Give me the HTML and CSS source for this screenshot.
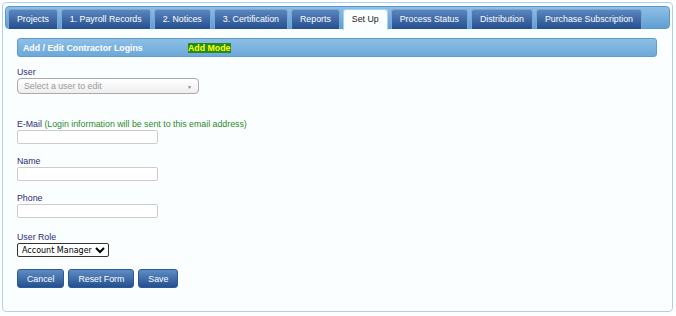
FILE: index.html
```html
<!DOCTYPE html>
<html lang="en">
<head>
    <meta charset="UTF-8">
    <title>Contractor Logins</title>
    <link rel="stylesheet" href="styles.css">
</head>
<body>
    <div class="panel">
        <ul class="tabs">
            <li class="tab">Projects</li>
            <li class="tab">1. Payroll Records</li>
            <li class="tab">2. Notices</li>
            <li class="tab">3. Certification</li>
            <li class="tab">Reports</li>
            <li class="tab active">Set Up</li>
            <li class="tab">Process Status</li>
            <li class="tab">Distribution</li>
            <li class="tab">Purchase Subscription</li>
        </ul>
        <div class="content">
            <div class="section-head">
                <span class="section-title">Add / Edit Contractor Logins</span>
                <span class="mode">Add Mode</span>
            </div>

            <div class="field first">
                <label class="label">User</label>
                <div class="fake-select">
                    <span>Select a user to edit</span>
                    <span class="caret">&#9660;</span>
                </div>
            </div>

            <div class="field spaced">
                <label class="label">E-Mail <span class="hint">(Login information will be sent to this email address)</span></label>
                <input class="text-input" type="text">
            </div>

            <div class="field">
                <label class="label">Name</label>
                <input class="text-input" type="text">
            </div>

            <div class="field">
                <label class="label">Phone</label>
                <input class="text-input" type="text">
            </div>

            <div class="field role">
                <label class="label">User Role</label>
                <select class="role-select">
                    <option>Account Manager</option>
                </select>
            </div>

            <div class="buttons">
                <button class="btn">Cancel</button>
                <button class="btn">Reset Form</button>
                <button class="btn">Save</button>
            </div>
        </div>
    </div>
</body>
</html>
```

FILE: styles.css
```css
body, html {
    margin: 0;
    padding: 0;
    background: #ffffff;
    font-family: "Liberation Sans", Arial, sans-serif;
    font-size: 8.8px;
}
.panel {
    margin: 2px 3px 0 2px;
    height: 310px;
    border: 1px solid #aad1ef;
    border-radius: 4px;
    background: #fbfefe;
    padding: 3px 2px;
    box-sizing: border-box;
}
.tabs {
    list-style: none;
    margin: 0;
    padding: 2px 2px 0 2px;
    display: flex;
    gap: 3px;
    height: 23px;
    box-sizing: border-box;
    background: linear-gradient(#8ec0e6, #5f9fd4);
    border: 1px solid #5b98cc;
    border-radius: 4px;
}
.tab {
    padding: 4px 8px 0 8px;
    height: 20px;
    box-sizing: border-box;
    color: #ffffff;
    background: linear-gradient(#5a85bd, #254f8e);
    border: 1px solid #7ea6d4;
    border-bottom: none;
    border-radius: 3px 3px 0 0;
    white-space: nowrap;
}
.tab.active {
    background: #fbfefe;
    color: #222222;
    border-color: #aad1ef;
    height: 21px;
    margin-bottom: -1px;
}
.content {
    padding: 9px 13px 0 12px;
}
.section-head {
    height: 19px;
    box-sizing: border-box;
    padding: 4px 5px 0 5px;
    background: linear-gradient(#8dbfe6, #6da8d9);
    border: 1px solid #5e9bd0;
    border-radius: 3px;
    color: #ffffff;
    font-weight: bold;
    display: flex;
}
.section-title {
    width: 165px;
}
.mode {
    color: #ffff00;
    background: #228b22;
    height: 10px;
    line-height: 10px;
}
.field {
    margin-top: 11px;
    display: flex;
    flex-direction: column;
    align-items: flex-start;
}
.field.first {
    margin-top: 9px;
}
.field.spaced {
    margin-top: 24px;
}
.field.role {
    margin-top: 13px;
}
.label {
    color: #2b2b7a;
    line-height: 12px;
}
.hint {
    color: #2b8a2b;
}
.fake-select {
    width: 182px;
    height: 16px;
    box-sizing: border-box;
    border: 1px solid #aaaaaa;
    border-radius: 4px;
    background: linear-gradient(#ffffff, #eeeeee);
    color: #999999;
    padding: 2px 6px 0 6px;
    display: flex;
    justify-content: space-between;
}
.caret {
    font-size: 5px;
    color: #888888;
    padding-top: 3px;
}
.text-input {
    width: 141px;
    height: 14px;
    margin: 0;
    box-sizing: border-box;
    border: 1px solid #cccccc;
    border-radius: 2px;
    background: #ffffff;
}
.role-select {
    font-family: "DejaVu Sans", Tahoma, sans-serif;
    font-size: 8px;
    height: 14px;
    width: 92px;
    margin: 0;
    padding: 0;
    border: 1px solid #333333;
    border-radius: 2px;
    background: #ffffff;
    color: #000000;
}
.buttons {
    display: flex;
    gap: 4px;
    margin-top: 12px;
}
.btn {
    font-family: "Liberation Sans", Arial, sans-serif;
    font-size: 8.8px;
    color: #ffffff;
    height: 19px;
    padding: 0 9px;
    border: 1px solid #2b5a96;
    border-radius: 3px;
    background: linear-gradient(#5f8cc4, #24508f);
}
```
